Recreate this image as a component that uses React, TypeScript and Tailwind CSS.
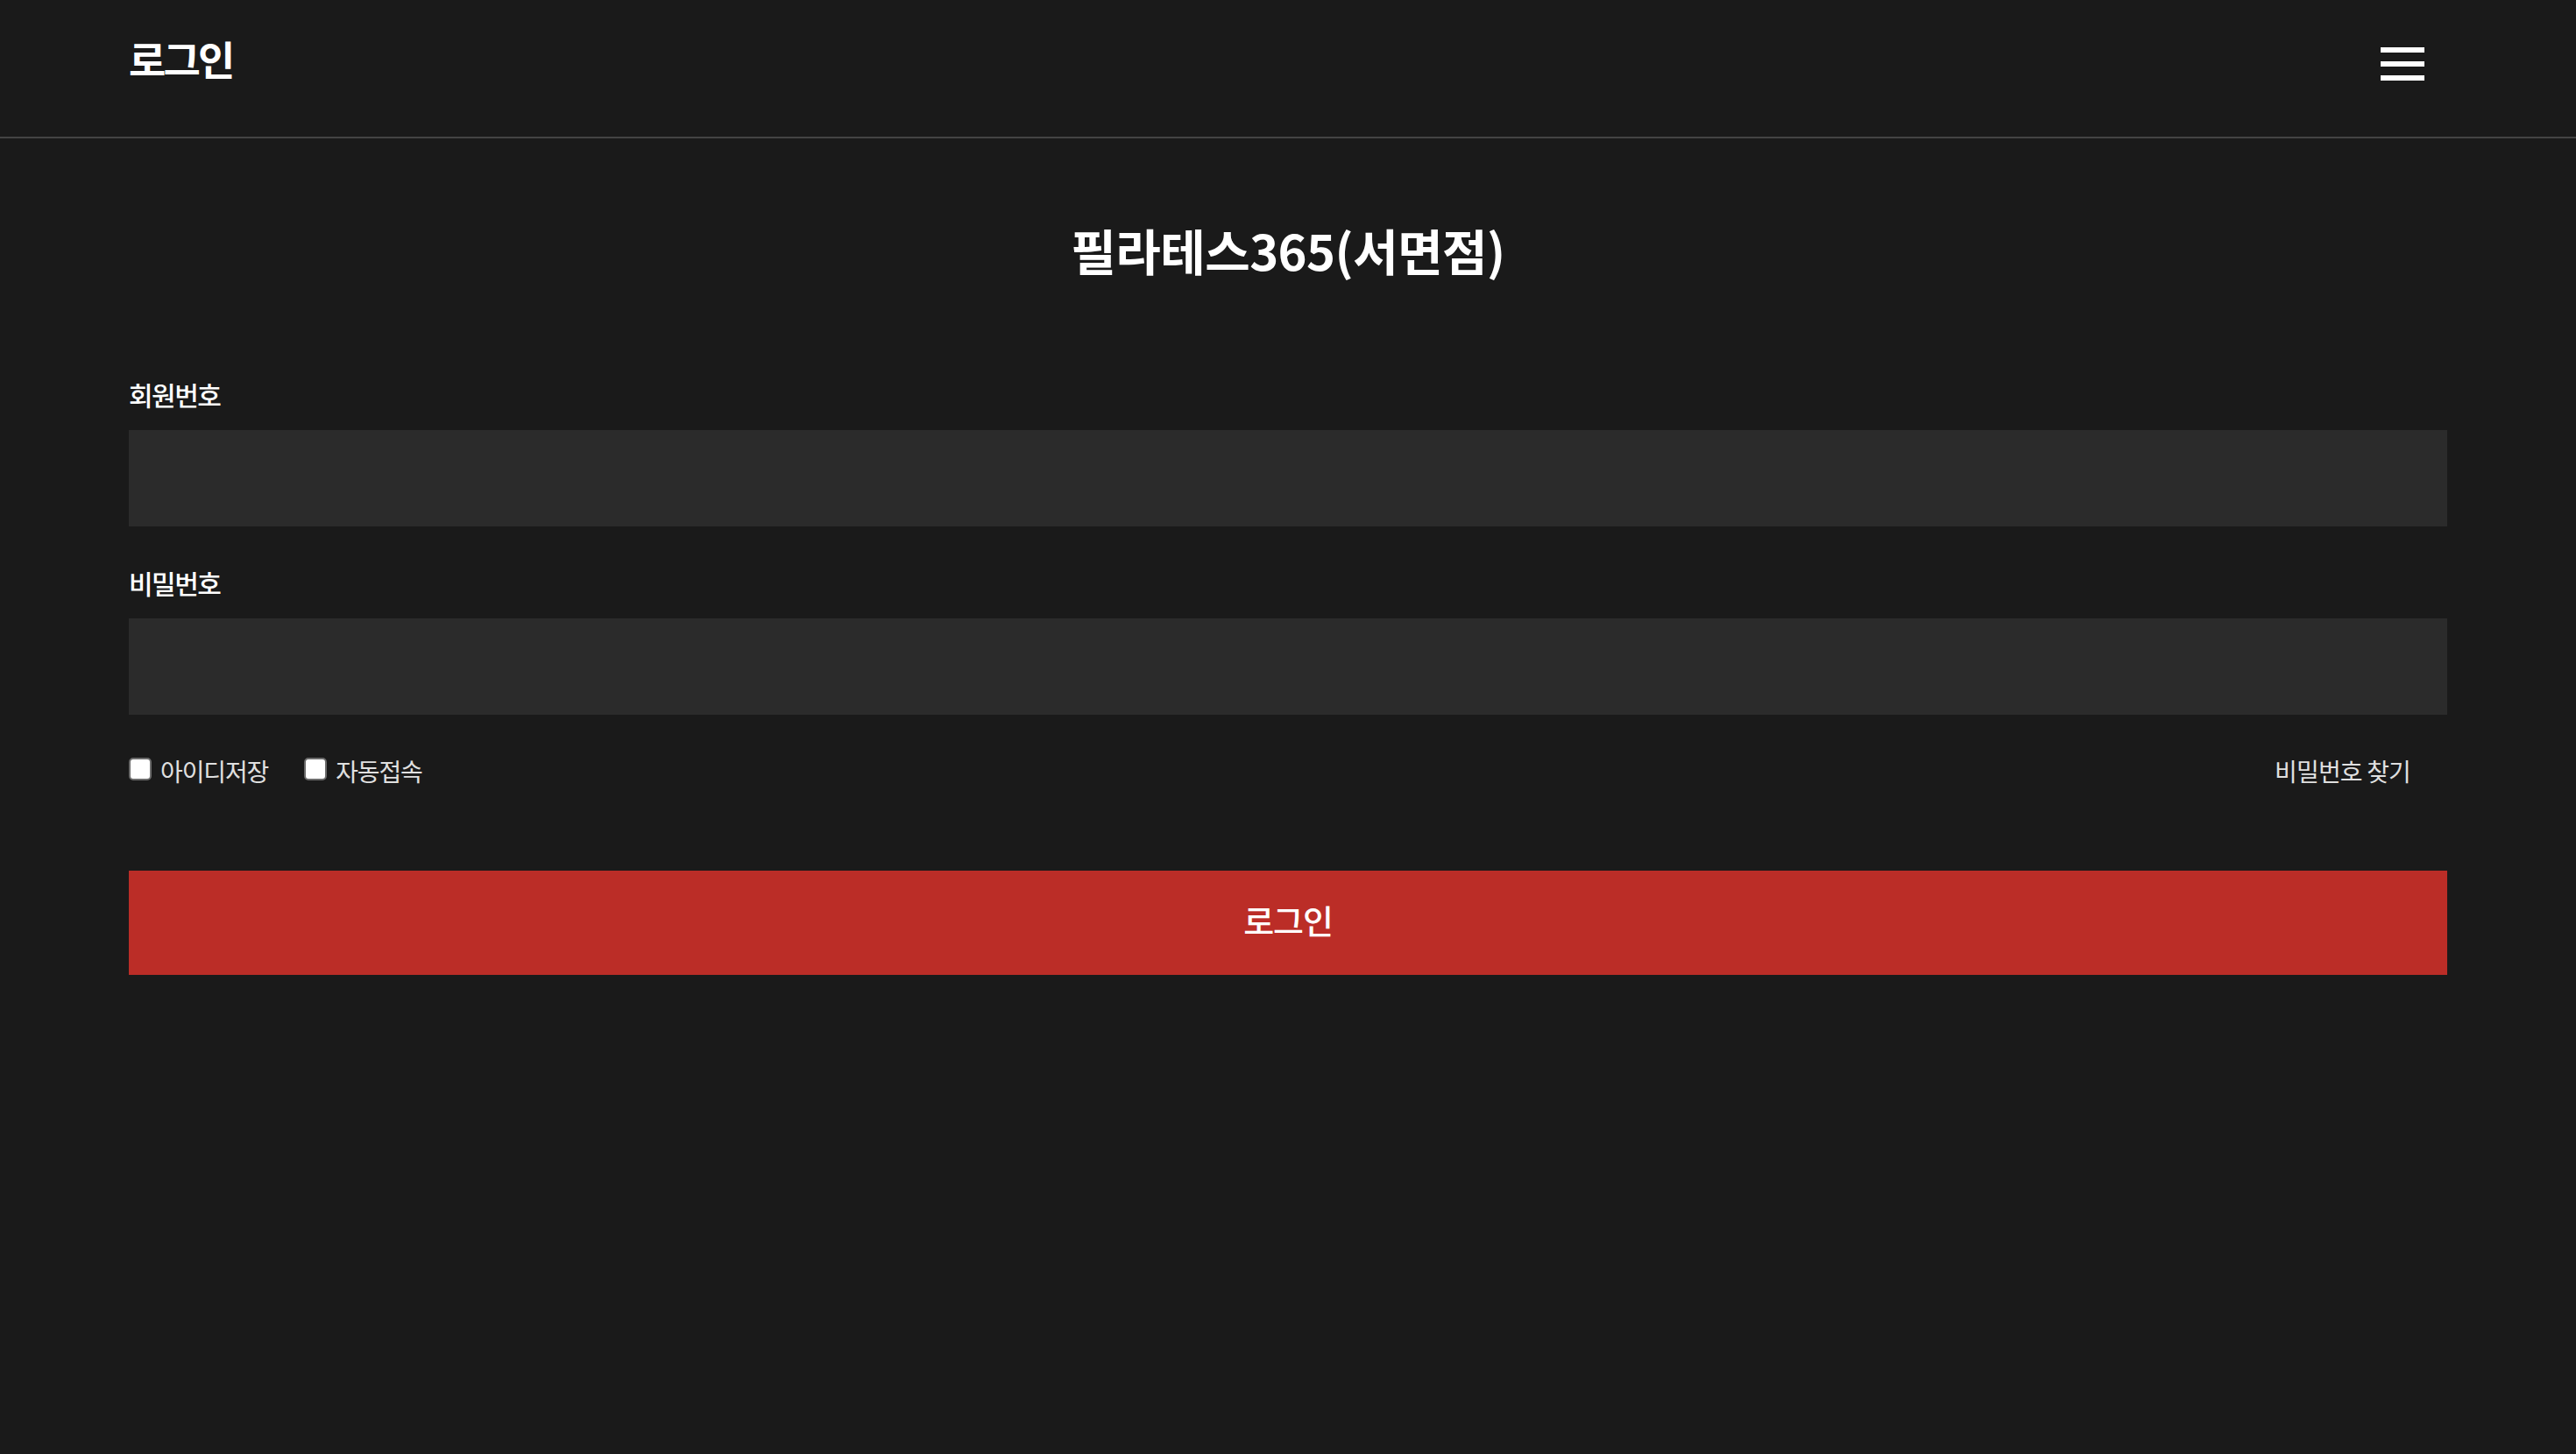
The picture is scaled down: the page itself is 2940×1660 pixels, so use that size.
import React from 'react';

const App: React.FC = () => {
  return (
    <div className="min-h-screen bg-[#1a1a1a] text-white font-['Noto_Sans_CJK_KR',sans-serif]">
      <header className="h-[158px] border-b-2 border-[#444444]">
        <div className="w-[90%] mx-auto flex justify-between items-start">
          <h1 className="mt-[38px] text-[46px] leading-[56px] font-bold tracking-[-0.06em]">로그인</h1>
          <button className="mt-[54px] mr-[26px] flex flex-col gap-[10px]">
            <span className="block w-[50px] h-[6px] bg-white"></span>
            <span className="block w-[50px] h-[6px] bg-white"></span>
            <span className="block w-[50px] h-[6px] bg-white"></span>
          </button>
        </div>
      </header>

      <main className="w-[90%] mx-auto">
        <h2 className="mt-[95px] text-center text-[56px] leading-[64px] font-bold tracking-[-0.01em]">필라테스365(서면점)</h2>

        <div className="mt-[115px]">
          <label className="block text-[30px] leading-[36px] font-medium tracking-[-0.05em]">회원번호</label>
          <input type="text" className="mt-[23px] block w-full h-[110px] bg-[#2b2b2b] outline-none px-6 text-[30px]" />
        </div>

        <div className="mt-[46px]">
          <label className="block text-[30px] leading-[36px] font-medium tracking-[-0.05em]">비밀번호</label>
          <input type="password" className="mt-[23px] block w-full h-[110px] bg-[#2b2b2b] outline-none px-6 text-[30px]" />
        </div>

        <div className="mt-[47px] flex items-center justify-between h-[34px]">
          <div className="flex items-center">
            <label className="flex items-center text-[28px] leading-[34px] text-[#e0e0e0] tracking-[-0.04em]">
              <input type="checkbox" className="appearance-none w-[26px] h-[26px] mr-[10px] mb-[4px] bg-white border-2 border-[#6b6b6b] rounded-[5px]" />
              아이디저장
            </label>
            <label className="ml-[41px] flex items-center text-[28px] leading-[34px] text-[#e0e0e0] tracking-[-0.04em]">
              <input type="checkbox" className="appearance-none w-[26px] h-[26px] mr-[10px] mb-[4px] bg-white border-2 border-[#6b6b6b] rounded-[5px]" />
              자동접속
            </label>
          </div>
          <a className="mr-[42px] text-[28px] leading-[34px] text-[#e0e0e0] tracking-[-0.03em]">비밀번호 찾기</a>
        </div>

        <button className="mt-[97px] block w-full h-[119px] pb-[8px] bg-[#bb2d27] text-[38px] font-medium tracking-[-0.03em]">로그인</button>
      </main>
    </div>
  );
};

export default App;
